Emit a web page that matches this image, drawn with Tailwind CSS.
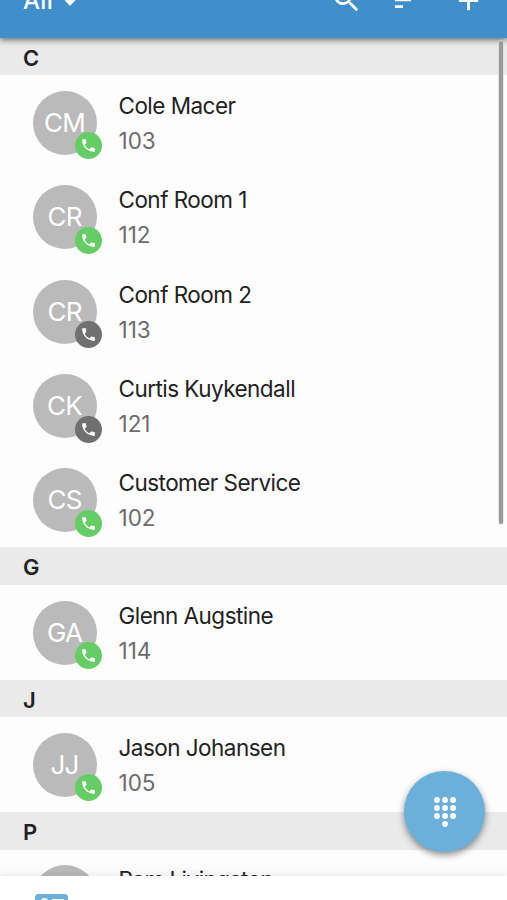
<!DOCTYPE html>
<html lang="en">
<head>
<meta charset="utf-8">
<title>Contacts</title>
<script src="https://cdn.jsdelivr.net/npm/@tailwindcss/browser@4"></script>
</head>
<body class="relative flex h-[900px] w-[507px] flex-col overflow-hidden bg-[#fdfdfd] font-['Inter','Liberation_Sans',sans-serif] text-[#222]">
<header class="relative z-10 h-[37.6px] shrink-0 overflow-visible bg-[#418fca] text-white shadow-[0_2px_6px_rgba(0,0,0,0.55)]">
  <div class="absolute -top-[15.5px] left-[23px] flex h-8 items-center">
    <span class="text-[24px] leading-8 font-medium tracking-[0.3px]">All</span>
    <svg class="mt-[1px] ml-[11px] h-[9px] w-[12px]" viewBox="0 0 12 9" fill="currentColor"><path d="M0 2.500h12L7 8q-1 1-2 0z"/></svg>
  </div>
  <svg class="absolute top-[-17.500px] left-[330px] h-[33px] w-[33px]" viewBox="0 0 24 24" fill="currentColor"><path d="M15.5 14h-.79l-.28-.27A6.47 6.47 0 0 0 16 9.500 6.500 6.500 0 1 0 9.500 16c1.610 0 3.090-.59 4.230-1.570l.27.28v.79l5 4.990L20.490 19zm-6 0C7.010 14 5 11.990 5 9.500S7.010 5 9.500 5 14 7.010 14 9.500 11.990 14 9.500 14z"/></svg>
  <svg class="absolute top-[-16px] left-[391px] h-[32px] w-[32px]" viewBox="0 0 24 24" fill="currentColor"><path d="M3 18h6v-2H3zM3 6v2h18V6zm0 7h12v-2H3z"/></svg>
  <svg class="absolute top-[-16.500px] left-[452px] h-[33px] w-[33px]" viewBox="0 0 24 24" fill="currentColor"><path d="M19 13h-6v6h-2v-6H5v-2h6V5h2v6h6z"/></svg>
</header>
<main id="list" class="min-h-0 flex-1 overflow-hidden"></main>
<div class="absolute top-[41px] right-[4px] z-20 h-[483px] w-[4px] rounded-full bg-[#999] ring-1 ring-[#d8d8d8]/60"></div>
<button class="absolute top-[771px] left-[404px] z-20 grid size-[81px] place-items-center rounded-full bg-[#6bb0db] text-white shadow-[0_3px_7px_rgba(0,0,0,0.45)]">
  <svg class="h-[30px] w-[22px]" viewBox="0 0 22 30" fill="currentColor"><circle cx="2.900" cy="3" r="2.900"/><circle cx="11" cy="3" r="2.900"/><circle cx="19.100" cy="3" r="2.900"/><circle cx="2.900" cy="11" r="2.900"/><circle cx="11" cy="11" r="2.900"/><circle cx="19.100" cy="11" r="2.900"/><circle cx="2.900" cy="19" r="2.900"/><circle cx="11" cy="19" r="2.900"/><circle cx="19.100" cy="19" r="2.900"/><circle cx="11" cy="27" r="2.900"/></svg>
</button>
<nav class="relative z-10 h-6 shrink-0 overflow-hidden bg-white pt-[18px] pl-[35px] shadow-[0_-2px_8px_rgba(0,0,0,0.08)]">
  <svg class="h-[28px] w-[33px]" viewBox="0 0 33 28"><rect width="33" height="28" rx="3.500" fill="#6bb0db"/><circle cx="9.500" cy="8" r="4" fill="#fff"/><path d="M17 5h12v2.500H17z" fill="#fff"/></svg>
</nav>
<script>
const groups = [
  ['C', [['CM','Cole Macer','103',1],['CR','Conf Room 1','112',1],['CR','Conf Room 2','113',0],['CK','Curtis Kuykendall','121',0],['CS','Customer Service','102',1]]],
  ['G', [['GA','Glenn Augstine','114',1]]],
  ['J', [['JJ','Jason Johansen','105',1]]],
  ['P', [['PL','Pam Livingston','106',1]]]
];
const row = ([initials, name, ext, online]) => `
  <li class="flex h-[94.4px] pt-[15.5px] pl-[33px]">
    <div class="relative grid size-[64px] shrink-0 place-items-center rounded-full bg-[#bababa] text-[26px] tracking-[-0.8px] text-white">
      <span class="-mt-px mr-px">${initials}</span>
      <span class="absolute top-[41.500px] left-[42px] grid size-[27px] place-items-center rounded-full ${online ? 'bg-[#66cc66]' : 'bg-[#707070]'}">
        <svg class="size-[17px]" viewBox="0 0 24 24" fill="#fff"><path d="M6.620 10.790c1.440 2.830 3.760 5.140 6.590 6.590l2.200-2.200c.27-.27.67-.36 1.020-.24 1.120.37 2.330.57 3.570.57.55 0 1 .45 1 1V20c0 .55-.45 1-1 1-9.390 0-17-7.610-17-17 0-.55.45-1 1-1h3.500c.55 0 1 .45 1 1 0 1.250.2 2.450.57 3.570.11.35.03.74-.25 1.020z"/></svg>
      </span>
    </div>
    <div class="ml-[21.500px] whitespace-nowrap text-[22.5px]">
      <p class="h-[35px] leading-[30px] tracking-[-0.53px]">${name}</p>
      <p class="leading-[30px] tracking-[0px] text-[#6c6c6c]">${ext}</p>
    </div>
  </li>`;
document.getElementById('list').innerHTML = groups.map(([letter, people]) => `
  <section>
    <h2 class="h-[37.8px] bg-[#eaeaea] pl-[23px] text-[22px] leading-[40px] font-semibold">${letter}</h2>
    <ul>${people.map(row).join('')}</ul>
  </section>`).join('');
</script>
</body>
</html>
